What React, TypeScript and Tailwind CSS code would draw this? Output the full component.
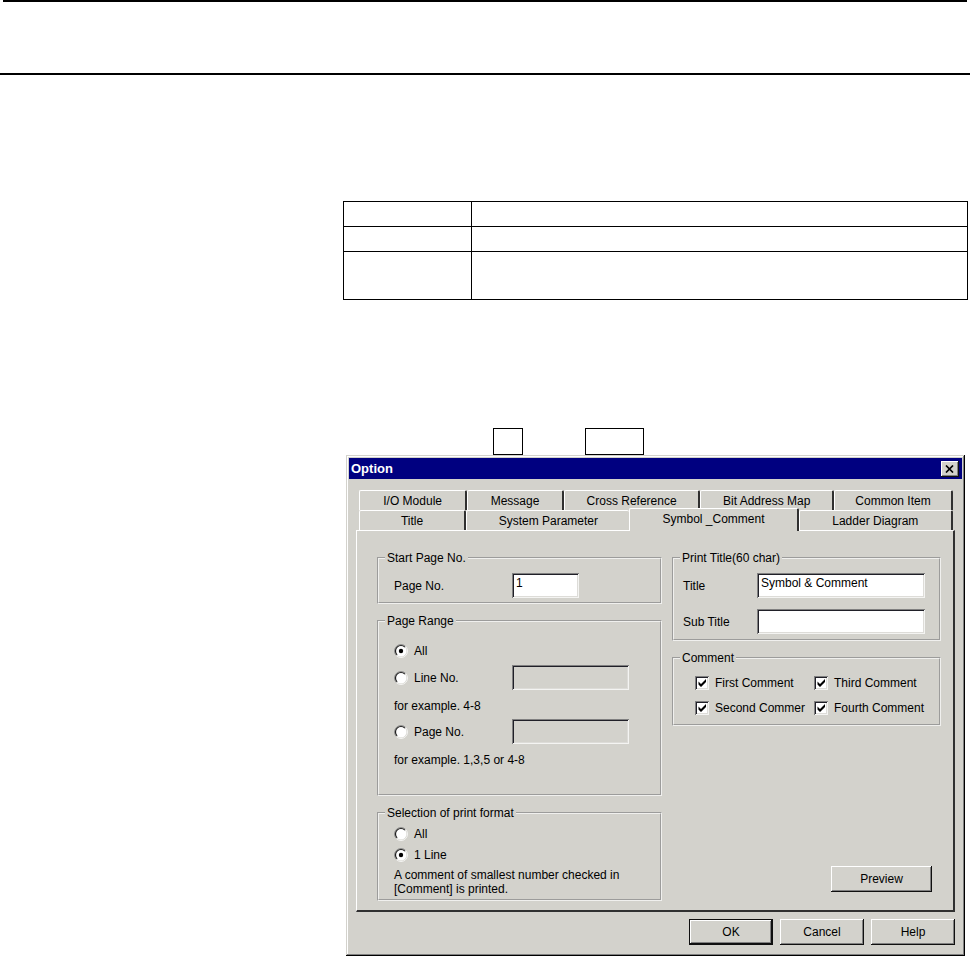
import { useState } from "react";
import type { ReactNode } from "react";
import clsx from "clsx";

const tabRows = [
  [
    { name: "I/O Module", size: "flex-[108]" },
    { name: "Message", size: "flex-[96]" },
    { name: "Cross Reference", size: "flex-[137]" },
    { name: "Bit Address Map", size: "flex-[134]" },
    { name: "Common Item", size: "flex-[119]" },
  ],
  [
    { name: "Title", size: "flex-[106]" },
    { name: "System Parameter", size: "flex-[165]" },
    { name: "Symbol _Comment", size: "flex-[169]" },
    { name: "Ladder Diagram", size: "flex-[154]" },
  ],
];

const sunken =
  "h-[25px] min-w-0 px-[4px] pb-[5px] outline-none shadow-[inset_1px_1px_#808080,inset_-1px_-1px_#f4f4f2,inset_2px_2px_#202028,inset_-2px_-2px_#dddcd8]";

const raised =
  "bg-[#d3d2cc] shadow-[inset_-1px_-1px_#101010,inset_1px_1px_#ffffff,inset_-2px_-2px_#808080]";

const Group = ({
  title,
  className,
  children,
}: {
  title: string;
  className?: string;
  children: ReactNode;
}) => (
  <fieldset className="min-w-0 border-2 [border-style:groove] border-[#f0f0ee]">
    <legend className="ml-[6px] px-[2px] leading-[16px]">{title}</legend>
    <div className={className}>{children}</div>
  </fieldset>
);

const Radio = ({
  label,
  name,
  defaultChecked,
  className,
}: {
  label: string;
  name: string;
  defaultChecked?: boolean;
  className?: string;
}) => (
  <label className={clsx("flex items-center gap-[6px]", className)}>
    <span className="grid h-[14px] w-[14px]">
      <input
        type="radio"
        name={name}
        defaultChecked={defaultChecked}
        className="peer col-start-1 row-start-1 appearance-none"
      />
      <svg
        viewBox="0 0 14 14"
        className="pointer-events-none col-start-1 row-start-1 [&>.dot]:opacity-0 peer-checked:[&>.dot]:opacity-100"
      >
        <circle cx="7" cy="7" r="5.5" fill="#fff" />
        <path
          d="M2.4 11.6A6.5 6.5 0 0 1 11.6 2.4"
          fill="none"
          stroke="#909090"
        />
        <path
          d="M3.1 10.9A5.5 5.5 0 0 1 10.9 3.1"
          fill="none"
          stroke="#202020"
          strokeWidth="1.2"
        />
        <path
          d="M2.4 11.6A6.5 6.5 0 0 0 11.6 2.4"
          fill="none"
          stroke="#f4f4f2"
        />
        <circle className="dot" cx="7" cy="7" r="2.2" fill="#000" />
      </svg>
    </span>
    {label}
  </label>
);

const Check = ({ label }: { label: string }) => (
  <label className="flex h-[25px] items-center gap-[6px] whitespace-nowrap">
    <span className="grid h-[14px] w-[14px] shrink-0">
      <input
        type="checkbox"
        defaultChecked
        className="peer col-start-1 row-start-1 appearance-none bg-white shadow-[inset_1px_1px_#808080,inset_-1px_-1px_#f4f4f2,inset_2px_2px_#202028,inset_-2px_-2px_#dddcd8]"
      />
      <svg
        viewBox="0 0 14 14"
        className="pointer-events-none col-start-1 row-start-1 opacity-0 peer-checked:opacity-100"
      >
        <path d="M3.5 5.5v3l2.5 2.5 5-5v-3l-5 5z" fill="#000" />
      </svg>
    </span>
    {label}
  </label>
);

const PushButton = ({
  children,
  isDefault,
  className,
}: {
  children: ReactNode;
  isDefault?: boolean;
  className?: string;
}) => (
  <button
    type="button"
    className={clsx(
      "h-[26px]",
      isDefault
        ? "bg-[#d3d2cc] shadow-[inset_0_0_0_1px_#101010,inset_-2px_-2px_#101010,inset_2px_2px_#ffffff,inset_-3px_-3px_#808080]"
        : raised,
      className
    )}
  >
    {children}
  </button>
);

const OptionDialog = () => {
  const [active, setActive] = useState("Symbol _Comment");

  return (
    <section
      aria-label="Option"
      className="mx-[3px] bg-[#d3d2cc] p-[3px] text-[12px] leading-[16px] text-black shadow-[inset_-1px_-1px_#000000,inset_1px_1px_#d3d2cc,inset_-2px_-2px_#808080,inset_2px_2px_#ffffff]"
    >
      {/* Title bar */}
      <div className="flex h-[21px] items-center justify-between bg-[#000080] pr-[3px] pl-[2px]">
        <h1 className="text-[13px] font-bold text-white">Option</h1>
        <button
          type="button"
          aria-label="Close"
          className={clsx("grid h-[16px] w-[18px] place-items-center", raised)}
        >
          <svg viewBox="0 0 10 8" className="h-[8px] w-[10px]">
            <path d="M1 0.5l7 7M8 0.5l-7 7" stroke="#000" strokeWidth="1.7" />
          </svg>
        </button>
      </div>

      <div className="px-[7px] pt-[11px] pb-[8px]">
        {/* Tabs */}
        <div role="tablist" className="mr-[2px] ml-[3px]">
          {tabRows.map((row, i) => (
            <div key={i} className="flex h-[20px] items-end">
              {row.map(({ name, size }, j) => (
                <button
                  key={name}
                  type="button"
                  role="tab"
                  aria-selected={active === name}
                  onClick={() => setActive(name)}
                  className={clsx(
                    "min-w-0 rounded-t-[2px] border-t border-l border-t-white border-l-white bg-[#d3d2cc] whitespace-nowrap",
                    size,
                    row[j + 1]?.name === active
                      ? "border-r-0"
                      : "border-r-2 border-r-[#303030]",
                    active === name
                      ? "relative z-10 -mb-px h-[23px] pb-[3px]"
                      : "h-[20px]"
                  )}
                >
                  {name}
                </button>
              ))}
            </div>
          ))}
        </div>

        {/* Tab page */}
        <div
          role="tabpanel"
          className="grid grid-cols-[285fr_269fr] gap-[10px] border-t border-r-2 border-b-2 border-l border-t-white border-r-[#303030] border-b-[#303030] border-l-white pt-[19px] pr-[12px] pb-[9px] pl-[20px]"
        >
          <div className="flex min-w-0 flex-col gap-[9px]">
            <Group title="Start Page No." className="pt-[7px] pb-[4px] pl-[15px]">
              <div className="flex items-center">
                <label htmlFor="start-page" className="w-[118px]">
                  Page No.
                </label>
                <input
                  id="start-page"
                  defaultValue="1"
                  className={clsx(sunken, "w-[67px] bg-white")}
                />
              </div>
            </Group>

            <Group title="Page Range" className="pt-[9px] pb-[26px] pl-[15px]">
              <Radio name="range" label="All" defaultChecked className="h-[25px]" />
              <div className="mt-[2px] flex items-center">
                <Radio name="range" label="Line No." className="w-[118px]" />
                <input
                  aria-label="Line No. range"
                  disabled
                  className={clsx(sunken, "w-[117px]")}
                />
              </div>
              <p className="mt-[8px]">for example. 4-8</p>
              <div className="mt-[5px] flex items-center">
                <Radio name="range" label="Page No." className="w-[118px]" />
                <input
                  aria-label="Page No. range"
                  disabled
                  className={clsx(sunken, "w-[117px]")}
                />
              </div>
              <p className="mt-[8px]">for example. 1,3,5 or 4-8</p>
            </Group>

            <Group
              title="Selection of print format"
              className="pt-[2px] pb-[3px] pl-[15px]"
            >
              <Radio name="format" label="All" className="h-[21px]" />
              <Radio
                name="format"
                label="1 Line"
                defaultChecked
                className="h-[21px]"
              />
              <p className="mt-[3px] leading-[14px]">
                A comment of smallest number checked in
                <br />
                [Comment] is printed.
              </p>
            </Group>
          </div>

          <div className="flex min-w-0 flex-col gap-[9px]">
            <Group
              title="Print Title(60 char)"
              className="pt-[7px] pr-[14px] pb-[5px] pl-[9px]"
            >
              <div className="grid grid-cols-[74px_1fr] items-center gap-y-[11px]">
                <label htmlFor="title">Title</label>
                <input
                  id="title"
                  defaultValue="Symbol & Comment"
                  className={clsx(sunken, "bg-white")}
                />
                <label htmlFor="sub-title">Sub Title</label>
                <input id="sub-title" className={clsx(sunken, "bg-white")} />
              </div>
            </Group>

            <Group title="Comment" className="pt-[4px] pb-[4px] pl-[21px]">
              <div className="grid grid-cols-[119px_1fr]">
                <Check label="First Comment" />
                <Check label="Third Comment" />
                <Check label="Second Commer" />
                <Check label="Fourth Comment" />
              </div>
            </Group>

            <PushButton className="mt-auto mr-[9px] mb-[9px] w-[101px] self-end">
              Preview
            </PushButton>
          </div>
        </div>

        {/* Dialog buttons */}
        <div className="mt-[7px] flex justify-end gap-[7px]">
          <PushButton isDefault className="w-[84px]">
            OK
          </PushButton>
          <PushButton className="w-[84px]">Cancel</PushButton>
          <PushButton className="w-[84px]">Help</PushButton>
        </div>
      </div>
    </section>
  );
};

const App = () => {
  return (
    <div className="bg-white font-['Liberation_Sans',Arial,sans-serif]">
      <header className="border-b-2 border-black">
        <div className="mx-[3px] h-[73px] border-t-2 border-black" />
      </header>

      <main className="mr-[2px] ml-[343px] pt-[126px]">
        <table className="w-full table-fixed border-collapse [&_td]:border [&_td]:border-black">
          <tbody>
            <tr className="h-[25px]">
              <td className="w-[128px]" />
              <td />
            </tr>
            <tr className="h-[25px]">
              <td />
              <td />
            </tr>
            <tr className="h-[48px]">
              <td />
              <td />
            </tr>
          </tbody>
        </table>

        {/* Key names */}
        <div className="mt-[128px] ml-[150px] flex gap-[62px]">
          <span className="h-[27px] w-[30px] border border-black" />
          <span className="h-[27px] w-[59px] border border-black" />
        </div>

        <OptionDialog />
      </main>
    </div>
  );
};

export default App;
